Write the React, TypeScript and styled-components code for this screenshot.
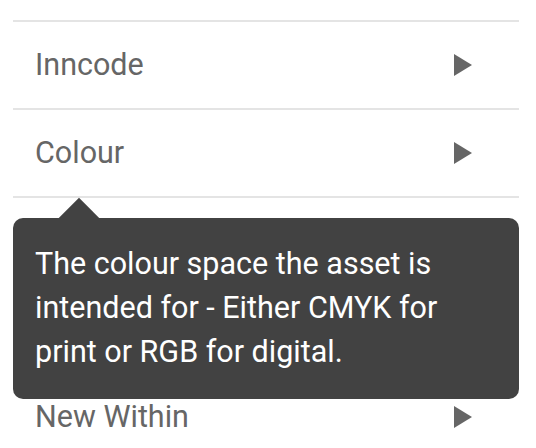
import React from 'react';
import styled, { createGlobalStyle } from 'styled-components';

const GlobalStyle = createGlobalStyle`
  html, body {
    margin: 0;
    padding: 0;
    background: #ffffff;
  }
  body {
    font-family: Roboto, "Liberation Sans", sans-serif;
  }
`;

const StyledPage = styled.div`
  padding: 20px 17px 0 13px;
  height: 448px;
  box-sizing: border-box;
  overflow: hidden;
`;

const StyledList = styled.ul`
  list-style: none;
  margin: 0;
  padding: 0;
  border-top: 2px solid #e4e4e4;
`;

const StyledRow = styled.li`
  position: relative;
  display: flex;
  align-items: center;
  justify-content: space-between;
  height: 86px;
  padding: 0 47px 0 22px;
  border-bottom: 2px solid #e4e4e4;
  color: #666666;
  font-size: 30.5px;
`;

const StyledLabel = styled.span`
  line-height: 1;
`;

const StyledTooltip = styled.div`
  position: absolute;
  top: calc(100% + 22px);
  left: 0;
  right: 0;
  z-index: 2;
  padding: 24px 22px 25px;
  border-radius: 10px;
  background: #424242;
  color: #ffffff;
  font-size: 30.5px;
  line-height: 44px;

  &::before {
    content: '';
    position: absolute;
    top: -14px;
    left: 51px;
    width: 30px;
    height: 30px;
    background: #424242;
    transform: rotate(45deg);
  }
`;

const ROWS = [
  { label: 'Inncode' },
  {
    label: 'Colour',
    tooltip:
      'The colour space the asset is intended for - Either CMYK for print or RGB for digital.',
  },
  { label: 'Format' },
  { label: 'Orientation' },
  { label: 'New Within' },
];

const Caret: React.FC = () => (
  <svg width="18" height="22" viewBox="0 0 18 22" aria-hidden="true">
    <polygon points="0,0 18,11 0,22" fill="#666666" />
  </svg>
);

const App: React.FC = () => {
  return (
    <>
      <GlobalStyle />
      <StyledPage>
        <StyledList>
          {ROWS.map((row) => (
            <StyledRow key={row.label}>
              <StyledLabel>{row.label}</StyledLabel>
              <Caret />
              {row.tooltip && <StyledTooltip>{row.tooltip}</StyledTooltip>}
            </StyledRow>
          ))}
        </StyledList>
      </StyledPage>
    </>
  );
};

export default App;
